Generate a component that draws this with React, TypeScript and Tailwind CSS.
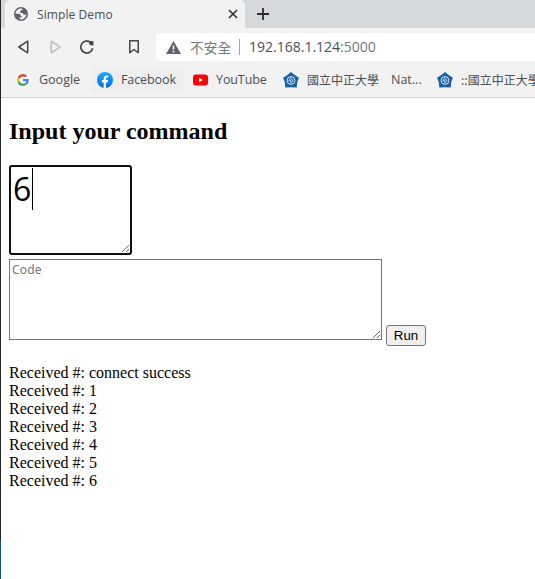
import React from "react";

const messages = ["connect success", "1", "2", "3", "4", "5", "6"];

function Globe() {
  return (
    <svg className="h-[14px] w-[14px] shrink-0" viewBox="0 0 14 14">
      <circle cx="7" cy="7" r="7" fill="#5f6368" />
      <path d="M7.8 1.6C4.2 1.2 1.7 3.7 1.5 6.7h2.7c1.5 0 2.5.7 2.5 1.9v.7h1.1v1.3H5.6v1.7c3.7.8 6.7-1.9 6.8-5.4-.6.9-1.5 1.1-2.4.8-.9-.3-1-.9-1-1.7H6.3V4.3c0-.7.5-1 1.2-1h1c0-.8-.2-1.300-.7-1.700Z" fill="#f2f2f2" />
    </svg>
  );
}

function GoogleIcon() {
  return (
    <svg className="h-4 w-4 shrink-0" viewBox="0 0 16 16">
      <circle cx="8" cy="8" r="8" fill="#fff" />
      <g transform="translate(2 2) scale(.25)">
        <path fill="#EA4335" d="M24 9.5c3.5 0 6.7 1.2 9.2 3.6l6.9-6.9C35.9 2.4 30.5 0 24 0 14.6 0 6.5 5.4 2.6 13.2l8 6.2C12.4 13.7 17.7 9.5 24 9.5z" />
        <path fill="#4285F4" d="M47 24.6c0-1.6-.2-3.1-.4-4.6H24v9h12.9c-.6 3-2.2 5.5-4.7 7.2l7.7 6C44.4 38 47 32 47 24.6z" />
        <path fill="#FBBC05" d="M10.5 28.6c-.5-1.5-.8-3-.8-4.6s.3-3.1.8-4.6l-8-6.2C.9 16.5 0 20.1 0 24s.9 7.5 2.6 10.8z" />
        <path fill="#34A853" d="M24 48c6.5 0 11.9-2.1 15.9-5.8l-7.7-6c-2.2 1.5-4.9 2.3-8.2 2.3-6.3 0-11.6-4.2-13.5-9.9l-8 6.2C6.5 42.6 14.6 48 24 48z" />
      </g>
    </svg>
  );
}

function FacebookIcon() {
  return (
    <svg className="h-4 w-4 shrink-0" viewBox="0 0 16 16">
      <defs>
        <linearGradient id="fb" x1="0" x2="0" y1="0" y2="1">
          <stop stopColor="#18acfe" />
          <stop offset="1" stopColor="#0866e8" />
        </linearGradient>
      </defs>
      <circle cx="8" cy="8" r="8" fill="url(#fb)" />
      <path d="M6.7 15.9v-5.5H4.9V8h1.8V6.5c0-2 1.2-3 2.9-3l1.7.1v2h-1c-1 0-1.3.5-1.3 1.2V8H11l-.4 2.4H9v5.5a8 8 0 0 1-2.3 0Z" fill="#fff" />
    </svg>
  );
}

function YoutubeIcon() {
  return (
    <svg className="h-3 w-[15px] shrink-0" viewBox="0 0 15 12">
      <rect y=".5" width="15" height="11" rx="3" fill="#f00" />
      <path d="m6 3.8 4 2.2-4 2.2Z" fill="#fff" />
    </svg>
  );
}

function UniversityIcon() {
  return (
    <svg className="h-4 w-4 shrink-0" viewBox="0 0 16 16">
      <path d="m8 0 3 2.500 4.900 3.300-1.600 4.200-.6 5.500-5.700-.2-5.700.2-.6-5.500L.1 5.800 5 2.500Z" fill="#1960aa" />
      <circle cx="8" cy="8.500" r="3.900" fill="none" stroke="#d8e8f6" strokeWidth="1" />
      <path d="M8.200 5.700 5.800 8.700h2.100v2.600M8.200 7l2 1.500-2 1.700" fill="none" stroke="#d8e8f6" strokeWidth=".9" />
    </svg>
  );
}

function Browser() {
  return (
    <header className="h-[98px] shrink-0 overflow-hidden border-b border-[#d0d0d0] bg-[#f2f2f2] font-['Open_Sans','Noto_Sans_CJK_TC',sans-serif] text-[#4c4f52]">
      <div className="flex h-7 bg-[#d5d9dc]">
        <div className="ml-1 flex h-7 w-[240px] shrink-0 items-center rounded-t-[5px] bg-[#f2f2f2] pl-[9px] pr-[7px]">
          <Globe />
          <span className="ml-[9px] mt-px w-[180px] whitespace-nowrap text-[12px] leading-[16px] tracking-[0.09px]">Simple Demo</span>
          <svg className="ml-auto h-[10px] w-[10px] shrink-0" viewBox="0 0 10 10">
            <path d="m1 1 8 8m0-8-8 8" stroke="#303234" strokeWidth="1.7" />
          </svg>
        </div>
        <svg className="ml-3 mt-2 h-3 w-3 shrink-0" viewBox="0 0 12 12">
          <path d="M6 0v12M0 6h12" stroke="#292b2d" strokeWidth="1.8" />
        </svg>
      </div>
      <div className="flex h-[38px] items-center">
        <svg className="ml-4 h-4 w-[14px] shrink-0" viewBox="0 0 14 16">
          <path d="M10.7 2.2v11.6L1.8 8Z" fill="none" stroke="#444648" strokeWidth="1.5" strokeLinejoin="round" />
        </svg>
        <svg className="ml-[17px] h-4 w-[14px] shrink-0" viewBox="0 0 14 16">
          <path d="M3.3 2.2v11.6L12 8Z" fill="none" stroke="#bcbcbc" strokeWidth="1.5" strokeLinejoin="round" />
        </svg>
        <svg className="ml-[17px] h-4 w-4 shrink-0" viewBox="0 0 16 16">
          <path d="M13.7 9.3A6 6 0 1 1 11.5 3.3" fill="none" stroke="#444648" strokeWidth="1.7" />
          <path d="M9.9 4.3 12 1.8l2.5.7v4l-3.2-.3Z" fill="#444648" />
        </svg>
        <svg className="ml-[33px] h-4 w-3 shrink-0" viewBox="0 0 12 16">
          <path d="M1.75 1.75h8.5v12L6 10.5l-4.25 3.25Z" fill="none" stroke="#444648" strokeWidth="1.5" strokeLinejoin="round" />
        </svg>
        <div className="ml-4 flex h-7 flex-1 items-center rounded-l bg-white pl-[10px]">
          <svg className="h-[13px] w-[15px] shrink-0" viewBox="0 0 15 13">
            <path d="M7.5 0 15 13H0Z" fill="#5f6368" />
            <path d="M7.5 4.5v4M7.5 9.8v1.6" stroke="#fff" strokeWidth="1.6" />
          </svg>
          <span className="ml-[9px] w-[42px] shrink-0 whitespace-nowrap font-['Noto_Sans_CJK_TC',sans-serif] text-[13.7px] font-normal leading-5 text-[#74777a]">不安全</span>
          <span className="ml-[7px] h-4 w-px shrink-0 bg-[#a4a7a9]" />
          <span className="ml-[9px] whitespace-nowrap text-[14px] leading-5">192.168.1.124<span className="text-[#74777a]">:5000</span></span>
        </div>
      </div>
      <div className="flex h-[27px] items-center whitespace-nowrap text-[12.5px] leading-4">
        <div className="ml-[14px] flex w-[76px] shrink-0 items-center gap-2">
          <GoogleIcon /><span>Google</span>
        </div>
        <div className="flex h-[27px] w-[92px] shrink-0 items-center gap-2 rounded bg-[#eeeeee] pl-[6px]">
          <FacebookIcon /><span className="tracking-[-0.1px]">Facebook</span>
        </div>
        <div className="ml-[10px] flex w-[90px] shrink-0 items-center gap-2">
          <YoutubeIcon /><span className="tracking-[-0.1px]">YouTube</span>
        </div>
        <div className="flex w-[154px] shrink-0 items-center">
          <UniversityIcon />
          <span className="ml-[8px] w-[72px] font-['Noto_Sans_CJK_TC',sans-serif] text-[12px]">國立中正大學</span>
          <span className="ml-[12px]">Nat...</span>
        </div>
        <UniversityIcon />
        <span className="ml-[8px] shrink-0 font-['Noto_Sans_CJK_TC',sans-serif] text-[12px]">::國立中正大學</span>
      </div>
    </header>
  );
}

export default function App() {
  return (
    <div className="flex h-[579px] w-[535px] overflow-hidden bg-white text-black">
      <div className="flex w-px shrink-0 flex-col bg-[#252525]"><div className="mt-auto h-[39px] bg-[#165275]" /></div>
      <div className="flex min-w-0 flex-1 flex-col">
        <Browser />
        <main className="flex flex-col items-start pl-2 pt-5 font-['Liberation_Serif',serif] text-[16px] leading-[18px]">
          <h2 className="h-[27px] whitespace-nowrap text-[24px] font-bold leading-[27px]">Input your command</h2>
          <div className="relative mt-5 h-[90px] w-[123px]">
            <textarea defaultValue="6" className="block h-[90px] w-[123px] rounded-[3px] border-2 border-[#101010] bg-white px-[2px] py-0 font-['Open_Sans',sans-serif] text-[32px] leading-[44px] outline-none" />
            <span className="absolute left-[23px] top-[3px] h-[42px] w-px bg-black" />
          </div>
          <div className="mt-1 flex items-end">
            <textarea placeholder="Code" className="block h-[81px] w-[373px] border border-[#767676] bg-white px-[2px] py-[2px] font-['Noto_Sans',sans-serif] text-[12px] leading-[16px] tracking-[0.2px] placeholder:text-[#757575]" />
            <button className="mb-[-6px] ml-1 h-[21px] w-10 rounded-[3px] border border-[#767676] bg-[#efefef] text-center font-['Liberation_Sans',sans-serif] text-[13.333px] leading-5">Run</button>
          </div>
          <section className="mt-6 whitespace-nowrap">
            {messages.map((message) => <div key={message}>Received #: {message}</div>)}
          </section>
        </main>
      </div>
    </div>
  );
}
